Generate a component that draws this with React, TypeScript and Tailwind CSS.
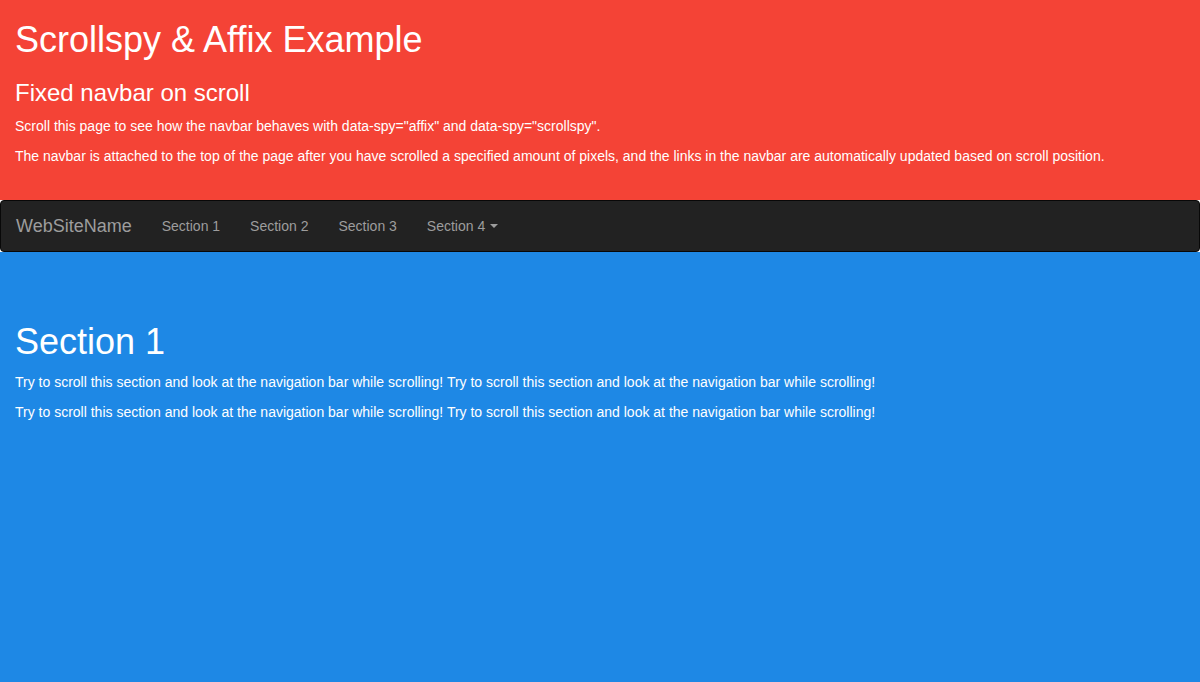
const links = ['Section 1', 'Section 2', 'Section 3'];

export default function App() {
  return (
    <div
      className="flex h-screen flex-col overflow-hidden text-[14px] leading-[20px] text-white"
      style={{ fontFamily: '"Liberation Sans", Arial, Helvetica, sans-serif' }}
    >
      <div className="h-[200px] shrink-0 bg-[#F44336] px-[15px]">
        <h1 className="mt-[20px] mb-[10px] text-[36px] leading-[1.1] font-medium">Scrollspy &amp; Affix Example</h1>
        <h3 className="mt-[20px] mb-[10px] text-[24px] leading-[1.1] font-medium">Fixed navbar on scroll</h3>
        <p className="mb-[10px]">Scroll this page to see how the navbar behaves with data-spy="affix" and data-spy="scrollspy".</p>
        <p className="mb-[10px]">
          The navbar is attached to the top of the page after you have scrolled a specified amount of pixels, and the links
          in the navbar are automatically updated based on scroll position.
        </p>
      </div>

      <nav className="h-[52px] shrink-0 rounded-[4px] border border-[#080808] bg-[#222222]">
        <div className="flex px-[15px]">
          <a className="-ml-[15px] block h-[50px] p-[15px] text-[18px] leading-[20px] text-[#9d9d9d]">WebSiteName</a>
          <ul className="flex">
            {links.map((l) => (
              <li key={l}>
                <a className="block p-[15px] text-[#9d9d9d]">{l}</a>
              </li>
            ))}
            <li>
              <a className="flex items-center p-[15px] text-[#9d9d9d]">
                Section 4
                <span className="ml-[5px] inline-block h-0 w-0 border-t-[4px] border-r-[4px] border-l-[4px] border-t-[#9d9d9d] border-r-transparent border-l-transparent" />
              </a>
            </li>
          </ul>
        </div>
      </nav>

      <div className="flex-1 bg-[#1E88E5] px-[15px] pt-[70px]">
        <h1 className="mt-0 mb-[10px] text-[36px] leading-[1.1] font-medium">Section 1</h1>
        <p className="mb-[10px]">
          Try to scroll this section and look at the navigation bar while scrolling! Try to scroll this section and look at
          the navigation bar while scrolling!
        </p>
        <p className="mb-[10px]">
          Try to scroll this section and look at the navigation bar while scrolling! Try to scroll this section and look at
          the navigation bar while scrolling!
        </p>
      </div>
    </div>
  );
}
